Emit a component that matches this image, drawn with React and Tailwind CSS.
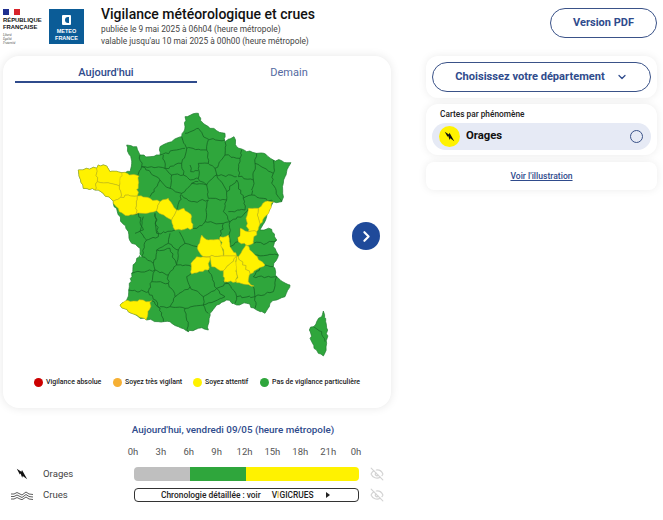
import React from "react";
import { EyeOff, ChevronDown, ChevronRight } from "lucide-react";

const outline = "375,50 392,45 415,40 422,62 432,72 450,85 470,92 495,100 495,125 522,110 530,140 560,155 590,160 612,160 640,180 665,182 693,188 680,215 670,250 668,280 665,305 640,305 630,325 620,350 600,390 618,388 635,388 650,420 640,440 655,465 640,500 650,530 668,545 690,555 675,590 650,600 630,610 615,640 590,630 560,610 530,615 500,600 470,615 450,640 445,690 415,685 385,695 355,680 330,665 295,665 260,660 215,640 180,615 200,600 208,560 215,520 225,490 240,460 240,445 215,430 205,395 175,345 160,310 160,303 115,270 105,270 70,265 62,240 55,210 80,205 110,205 115,195 140,198 150,215 185,218 210,215 215,190 200,135 230,140 240,165 270,170 300,165 300,140 335,125 365,110 375,80";

const yellow = [
  "55,210 80,205 110,205 112,245 105,270 70,265 62,240",
  "110,205 115,195 140,198 150,215 185,218 195,225 178,258 150,250 112,245",
  "185,218 237,228 232,288 205,285 182,292 178,258",
  "112,245 150,250 178,258 182,292 160,303 115,270 105,270",
  "160,303 182,292 205,285 232,288 228,342 205,347 178,335 160,310",
  "232,288 262,292 300,305 290,332 228,342",
  "300,305 325,295 350,330 335,360 290,332",
  "350,330 372,325 395,350 398,385 345,390 335,360",
  "595,325 615,305 640,305 620,345 600,372 592,345",
  "565,325 595,325 592,345 600,372 590,395 565,395 558,355",
  "540,385 565,395 590,395 580,430 558,435 535,425",
  "425,405 445,420 480,420 490,468 430,470 412,445",
  "480,410 505,405 510,440 530,468 490,468",
  "410,470 430,470 450,470 445,510 395,522 393,490",
  "430,470 490,468 530,468 490,512 455,500 450,470",
  "558,435 585,465 615,495 570,522 535,470",
  "490,512 530,468 530,545 492,545",
  "535,470 570,522 565,545 582,558 530,548 530,468",
  "180,615 195,603 275,602 258,660 215,640",
];

const lines = [
  "375,100 415,85 440,115 495,120", "365,110 380,145 440,150 445,120", "300,165 375,145",
  "310,165 315,205 365,190 380,145", "240,165 245,200 315,205", "440,150 445,190 465,205 495,165 495,125",
  "495,165 540,175 545,150", "540,175 535,230 580,240 585,190 590,160", "585,190 640,220 640,180",
  "640,220 635,250 665,305", "580,240 575,285 640,305", "465,205 470,225 530,230",
  "470,225 440,255 415,235 415,190 445,190", "365,190 370,225 390,240 415,235", "390,195 392,215 415,212",
  "315,205 335,225 330,265 300,240 245,200", "245,200 235,230", "335,225 370,225",
  "330,265 365,280 395,250 415,245", "300,240 270,290", "365,280 350,330", "395,250 440,255 445,295 500,300",
  "470,225 500,275 530,240", "500,275 500,300 490,335 510,365", "530,240 550,295 575,285",
  "550,295 555,330 505,335", "395,305 445,300 435,365 410,385 398,385", "395,305 365,285",
  "435,365 490,370 510,365", "490,370 480,410", "510,365 550,345 565,325", "510,365 510,440 535,425 540,385",
  "205,347 235,340 250,390 225,400", "250,350 240,395 260,420 295,410 285,340", "285,340 290,400 345,390",
  "260,420 245,470 280,490 290,450 325,430 330,400", "325,430 355,450 375,430 358,395", "375,430 412,440",
  "355,450 350,495 395,500", "290,450 330,445 350,495 325,525 285,510 280,490", "215,520 285,510 275,545 265,575 205,570",
  "275,545 325,550 345,590 390,560 380,530 395,520", "325,525 325,550", "265,575 300,625 275,602",
  "345,590 330,620 300,620", "300,625 310,665", "330,620 375,625 385,695", "375,625 430,615 445,640",
  "390,560 430,590 430,615 495,590 470,565 445,510", "430,590 470,565 505,550 490,545", "505,550 530,590 525,610",
  "530,590 585,590 585,625", "585,590 640,575 650,530", "580,560 585,590", "600,505 580,530 650,530",
  "580,430 620,430 650,420", "585,465 655,465", "615,495 640,500",
];

const corsica = "790,633 797,665 803,690 800,730 790,768 775,760 762,745 755,725 748,690 770,665 785,650";

function noise(x, y) {
  const v = Math.sin(x * 12.9898 + y * 78.233) * 43758.5453;
  return (v - Math.floor(v)) * 2 - 1;
}

function jag(s, amp = 3.5, closed = true) {
  const pts = s.split(" ").map((p) => p.split(",").map(Number));
  const out = [];
  const count = closed ? pts.length : pts.length - 1;
  for (let i = 0; i < count; i++) {
    const a = pts[i];
    const b = pts[(i + 1) % pts.length];
    const n = Math.max(1, Math.round(Math.hypot(b[0] - a[0], b[1] - a[1]) / 9));
    for (let k = 0; k < n; k++) {
      const x = a[0] + ((b[0] - a[0]) * k) / n;
      const y = a[1] + ((b[1] - a[1]) * k) / n;
      if (k === 0) out.push(`${a[0]},${a[1]}`);
      else {
        const rx = Math.round(x);
        const ry = Math.round(y);
        out.push(`${(x + noise(rx + ry, rx * ry * 0.01) * amp).toFixed(1)},${(y + noise(ry - rx, rx + ry) * amp).toFixed(1)}`);
      }
    }
  }
  if (!closed) out.push(`${pts[pts.length - 1][0]},${pts[pts.length - 1][1]}`);
  return out.join(" ");
}

function FranceMap() {
  return (
    <svg viewBox="0 0 840 780" className="w-[280px] h-[260px] block">
      <polygon points={jag(outline)} fill="#2fa63c" stroke="#1c7a2d" strokeWidth="2" strokeLinejoin="round" />
      {lines.map((p) => (
        <polyline key={p} points={jag(p, 3.5, false)} fill="none" stroke="#176425" strokeWidth="2.4" strokeLinejoin="round" />
      ))}
      {yellow.map((p) => (
        <polygon key={p} points={jag(p)} fill="#fff200" stroke="#c2b11c" strokeWidth="1.6" strokeLinejoin="round" />
      ))}
      <polygon points={jag(corsica)} fill="#2fa63c" stroke="#1c7a2d" strokeWidth="2" strokeLinejoin="round" />
      <polyline points={jag("760,680 785,695 795,725", 2.5, false)} fill="none" stroke="#176425" strokeWidth="2" />
      <path d="M223 445 L243 470" stroke="#fff" strokeWidth="3" />
    </svg>
  );
}

function Bolt({ className = "w-[12px] h-[12px]" }) {
  return (
    <svg viewBox="0 0 12 12" className={className}>
      <path d="M0.8 0.8 L5.4 3.8 L6 2 L11.2 11.2 L6.8 8 L6.2 9.8 L4.6 5.4 L3.8 6.4 Z" fill="#111" />
    </svg>
  );
}

function Waves() {
  return (
    <svg viewBox="0 0 22 9" className="w-[22px] h-[9px]" fill="none" stroke="#333" strokeWidth="0.8">
      <path d="M0 3 L3 3 L6 1.5 L9 3 L11 4 L15 1 L18 3 L22 3.5" />
      <path d="M0 5.5 L3 5.5 L6 4 L9 5.5 L11 6.5 L15 3.5 L18 5.5 L22 6" />
      <path d="M0 8 L3 8 L6 6.5 L9 8 L11 8.7 L15 6 L18 8 L22 8.5" />
    </svg>
  );
}

function Legend({ color, label }) {
  return (
    <div className="flex items-center gap-[3px]">
      <span className={`w-[9px] h-[9px] rounded-full ${color}`} />
      <span className="text-[7px] font-medium text-[#222]">{label}</span>
    </div>
  );
}

const hours = ["0h", "3h", "6h", "9h", "12h", "15h", "18h", "21h", "0h"];

export default function App() {
  return (
    <div className="h-[520px] w-[663px] overflow-hidden bg-white relative font-['Roboto',sans-serif]">
      <header className="flex h-[56px] items-start">
        <div className="w-[49px] pl-[3px] pt-[9px] shrink-0">
          <div className="flex w-[17px] h-[6px]">
            <span className="flex-1 bg-[#1f2f8f]" />
            <span className="flex-1 bg-white" />
            <span className="flex-1 bg-[#d8232a]" />
          </div>
          <div className="mt-[2px] text-[5.9px] leading-[7px] font-bold text-[#111] font-['Liberation_Sans',sans-serif]">
            <div>RÉPUBLIQUE</div>
            <div>FRANÇAISE</div>
          </div>
          <div className="mt-[2px] text-[3px] leading-[4px] italic text-[#444] font-['Liberation_Serif',serif]">
            <div>Liberté</div>
            <div>Égalité</div>
            <div>Fraternité</div>
          </div>
        </div>
        <div className="mt-[9px] w-[35px] h-[35px] bg-[#0b5c97] shrink-0 flex flex-col items-center pt-[6px]">
          <div className="w-[9px] h-[10px] bg-white rounded-[1px] flex items-center justify-center">
            <span className="w-[4px] h-[6px] rounded-l-full bg-[#0b5c97]" />
          </div>
          <div className="mt-[3px] text-[5.5px] leading-[6.5px] font-bold text-white text-center font-['Liberation_Sans',sans-serif]">
            METEO<br />FRANCE
          </div>
        </div>
        <div className="ml-[17px] pt-[6px] flex-1">
          <h1 className="text-[14px] leading-[17px] font-medium text-[#111]">Vigilance météorologique et crues</h1>
          <p className="mt-[1px] text-[8.35px] leading-[11.5px] text-[#444]">publiée le 9 mai 2025 à 06h04 (heure métropole)</p>
          <p className="text-[8.35px] leading-[11.5px] text-[#444]">valable jusqu'au 10 mai 2025 à 00h00 (heure métropole)</p>
        </div>
        <button className="mt-[8px] mr-[6px] w-[107px] h-[30px] rounded-full border border-[#3a5288] text-[11px] font-bold text-[#2f4b8c] shrink-0">
          Version PDF
        </button>
      </header>

      <main className="flex items-start">
        <div className="w-[426px] shrink-0 pl-[3px]">
          <section className="w-[388px] h-[352px] rounded-[16px] bg-white shadow-[0_0_10px_rgba(0,0,0,0.1)] relative">
            <div className="flex pl-[12px] pt-[10px] h-[27px] items-start text-[11px] font-medium">
              <div className="w-[182px] h-[17px] border-b-2 border-[#2f4b8c] text-[#2f4b8c] text-center leading-[14px]">Aujourd'hui</div>
              <div className="w-[184px] text-[#54699f] text-center leading-[14px] font-normal">Demain</div>
            </div>
            <div className="ml-[57px] mt-[17px]">
              <FranceMap />
            </div>
            <button className="absolute left-[349px] top-[166px] w-[28px] h-[28px] rounded-full bg-[#1f4a9a] flex items-center justify-center">
              <ChevronRight className="w-[17px] h-[17px] text-white" strokeWidth={3} />
            </button>
            <div className="absolute left-[31px] top-[321px] flex items-center">
              <div className="w-[79px]"><Legend color="bg-[#cc0000]" label="Vigilance absolue" /></div>
              <div className="w-[80px]"><Legend color="bg-[#f6b034]" label="Soyez très vigilant" /></div>
              <div className="w-[67px]"><Legend color="bg-[#fff200]" label="Soyez attentif" /></div>
              <Legend color="bg-[#2fa63c]" label="Pas de vigilance particulière" />
            </div>
          </section>

          <div className="w-[388px] pt-[15px]">
            <div className="text-center text-[9.85px] leading-[13px] font-medium text-[#2f4b8c] pl-[78px] pr-[3px] -ml-[3px]">
              Aujourd'hui, vendredi 09/05 (heure métropole)
            </div>
            <div className="flex ml-[116px] mt-[10px] w-[251px] text-[9.5px] leading-[12px] text-[#555]">
              {hours.map((h, i) => (
                <span key={i} className="w-[27.9px] text-center shrink-0">{h}</span>
              ))}
            </div>
            <div className="flex items-center h-[14px] mt-[9px] -ml-[3px]">
              <div className="w-[43px] flex justify-center pl-[1px]"><Bolt /></div>
              <span className="w-[91px] text-[9.6px] text-[#444]">Orages</span>
              <div className="w-[225px] h-[14px] rounded-[4px] overflow-hidden flex">
                <span className="w-[56px] bg-[#bfbfbf]" />
                <span className="w-[56px] bg-[#2fa63c]" />
                <span className="flex-1 bg-[#fff200]" />
              </div>
              <EyeOff className="ml-[11px] w-[14px] h-[14px] text-[#d3d3d3]" />
            </div>
            <div className="flex items-center h-[14px] mt-[7px] -ml-[3px]">
              <div className="w-[43px] flex justify-center"><Waves /></div>
              <span className="w-[91px] text-[9.6px] text-[#444]">Crues</span>
              <div className="w-[225px] h-[14px] rounded-[4px] border border-[#333] flex items-center text-[8.4px] font-medium text-[#222] pl-[26px]">
                <span>Chronologie détaillée : voir</span>
                <span className="ml-[11px]">V<span className="text-[#d9a520]">I</span>GICRUES</span>
                <span className="ml-[12px] w-0 h-0 border-y-[3px] border-y-transparent border-l-[4px] border-l-[#222]" />
              </div>
              <EyeOff className="ml-[11px] w-[14px] h-[14px] text-[#d3d3d3]" />
            </div>
          </div>
        </div>

        <aside className="w-[231px] flex flex-col gap-[6px] shrink-0">
          <div className="h-[42px] rounded-[12px] bg-white shadow-[0_0_8px_rgba(0,0,0,0.08)] p-[6px]">
            <button className="w-[219px] h-[30px] rounded-full border border-[#3a5288] flex items-center justify-center gap-[11px] text-[11.1px] font-bold text-[#2f4b8c]">
              Choisissez votre département
              <ChevronDown className="w-[12px] h-[12px]" strokeWidth={2.5} />
            </button>
          </div>
          <div className="h-[51px] rounded-[12px] bg-white shadow-[0_0_8px_rgba(0,0,0,0.08)] px-[6px] pt-[4px]">
            <div className="pl-[8px] text-[8.3px] leading-[12px] font-medium text-[#222]">Cartes par phénomène</div>
            <div className="mt-[3px] h-[27px] rounded-full bg-[#e6eaf5] flex items-center pl-[7px] pr-[8px]">
              <span className="w-[21px] h-[21px] rounded-full bg-[#fff200] flex items-center justify-center"><Bolt className="w-[11px] h-[11px]" /></span>
              <span className="ml-[6px] text-[11.3px] font-bold text-[#111]">Orages</span>
              <span className="ml-auto w-[13px] h-[13px] rounded-full border border-[#3a5288]" />
            </div>
          </div>
          <div className="h-[28px] mt-[1px] rounded-[8px] bg-white shadow-[0_0_8px_rgba(0,0,0,0.08)] flex items-center justify-center pt-[1px]">
            <a className="text-[8.6px] font-medium text-[#2f4b8c] underline">Voir l'illustration</a>
          </div>
        </aside>
      </main>
    </div>
  );
}
